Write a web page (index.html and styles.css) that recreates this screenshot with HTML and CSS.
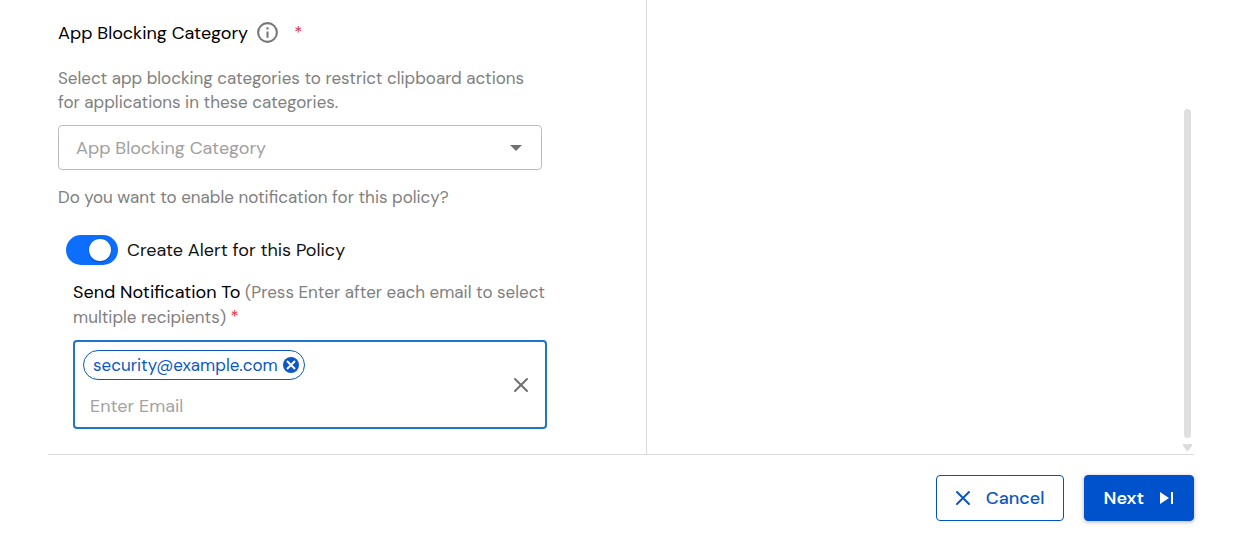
FILE: index.html
```html
<!DOCTYPE html>
<html lang="en">
<head>
    <meta charset="UTF-8">
    <meta name="viewport" content="width=device-width, initial-scale=1.0">
    <title>App Blocking Policy</title>
    <link rel="stylesheet" href="styles.css">
</head>
<body>
    <form class="policy">
        <div class="panels">
            <!-- Policy settings -->
            <div class="settings">
                <div class="title-row">
                    <label class="title" for="category">App Blocking Category</label>
                    <svg class="info-icon" viewBox="0 0 24 24" width="25" height="25" aria-hidden="true">
                        <circle cx="12" cy="12" r="9"/>
                        <path d="M12 11v6M12 7v2"/>
                    </svg>
                    <span class="required">*</span>
                </div>
                <p class="help">Select app blocking categories to restrict clipboard actions for applications in these categories.</p>
                <div class="select-box">
                    <select id="category">
                        <option>App Blocking Category</option>
                    </select>
                    <svg class="arrow" viewBox="0 0 12 6" width="12" height="6" aria-hidden="true">
                        <path d="M0 0h12L6 6z"/>
                    </svg>
                </div>
                <p class="question">Do you want to enable notification for this policy?</p>

                <label class="toggle-row">
                    <input type="checkbox" class="toggle" checked>
                    <span>Create Alert for this Policy</span>
                </label>

                <div class="notify">
                    <label class="notify-label" for="email"><span class="notify-title">Send Notification To</span> (Press Enter after each email to select multiple recipients) <span class="required">*</span></label>
                    <div class="email-box">
                        <div class="email-entries">
                            <span class="chip">security@example.com
                                <button type="button" class="chip-remove" aria-label="Remove security@example.com">
                                    <svg viewBox="0 0 16 16" width="16" height="16">
                                        <circle cx="8" cy="8" r="8"/>
                                        <path d="M4 4l8 8M12 4l-8 8"/>
                                    </svg>
                                </button>
                            </span>
                            <input type="text" id="email" placeholder="Enter Email">
                        </div>
                        <button type="button" class="clear" aria-label="Clear">
                            <svg class="cross" viewBox="0 0 16 16" width="16" height="16">
                                <path d="M2 2l12 12M14 2L2 14"/>
                            </svg>
                        </button>
                    </div>
                </div>
            </div>

            <!-- Empty side panel with its scrollbar -->
            <div class="side">
                <div class="scroll-thumb"></div>
                <svg class="scroll-arrow" viewBox="0 0 9 7" width="9" height="7" aria-hidden="true">
                    <path d="M0 0h9v2L5 7H4L0 2z"/>
                </svg>
            </div>
        </div>

        <div class="actions">
            <button type="button" class="btn btn-cancel">
                <svg class="cross" viewBox="0 0 16 16" width="16" height="16" aria-hidden="true">
                    <path d="M2 2l12 12M14 2L2 14"/>
                </svg>
                Cancel
            </button>
            <button type="button" class="btn btn-next">
                Next
                <svg viewBox="0 0 14 14" width="14" height="14" aria-hidden="true">
                    <path d="M0 1l9 6-9 6zM11 1h2v12h-2z"/>
                </svg>
            </button>
        </div>
    </form>
</body>
</html>
```
FILE: styles.css
```css
* {
    box-sizing: border-box;
}

body {
    margin: 0;
    background: #fff;
    color: #111;
    font-family: "DM Sans", Inter, sans-serif;
    font-size: 17px;
    line-height: 24px;
}

button,
input,
select {
    font: inherit;
}

p {
    margin: 0;
}

.policy {
    padding: 0 43px 0 48px;
}

.panels {
    display: grid;
    grid-template-columns: 23fr 21fr;
    border-bottom: 1px solid #dcdcdc;
}

.settings {
    padding: 20px 99px 25px 10px;
    border-right: 1px solid #dcdcdc;
}

.title-row {
    display: flex;
    align-items: center;
    gap: 7px;
}

.title {
    font-size: 18px;
    color: #000;
}

.info-icon {
    fill: none;
    stroke: #777;
    stroke-width: 2;
}

.required {
    color: #e0303a;
}

.title-row .required {
    margin-left: 7px;
}

.help {
    margin-top: 21px;
    color: #808080;
}

.select-box {
    display: grid;
    align-items: center;
    margin: 11px 5px 0 0;
}

.select-box select,
.select-box .arrow {
    grid-area: 1 / 1;
}

.select-box select {
    appearance: none;
    width: 100%;
    height: 45px;
    padding: 0 40px 0 17px;
    border: 1px solid #bdbdbd;
    border-radius: 4px;
    background: #fff;
    color: #a0a0a0;
    font-size: 18px;
}

.arrow {
    justify-self: end;
    margin-right: 20px;
    fill: #707070;
    pointer-events: none;
}

.question {
    margin-top: 15px;
    color: #808080;
}

.toggle-row {
    display: flex;
    align-items: center;
    gap: 9px;
    margin: 26px 0 0 8px;
    font-size: 18px;
}

.toggle {
    appearance: none;
    display: flex;
    align-items: center;
    justify-content: flex-end;
    flex: none;
    width: 52px;
    height: 30px;
    margin: 0;
    padding: 0 7px;
    border-radius: 15px;
    background: #0d6efd;
}

.toggle::before {
    content: "";
    width: 22px;
    height: 22px;
    border-radius: 50%;
    background: #fff;
    box-shadow: 0 1px 2px rgba(0, 0, 0, 0.3);
}

.toggle:not(:checked) {
    justify-content: flex-start;
    background: #bbb;
}

.notify {
    margin: 15px 0 0 15px;
}

.notify-label {
    display: block;
    color: #808080;
    line-height: 25px;
}

.notify-title {
    color: #000;
    font-size: 18px;
}

.email-box {
    display: flex;
    align-items: center;
    margin-top: 10px;
    padding: 8px 16px 8px 8px;
    border: 2px solid #1f75cb;
    border-radius: 4px;
}

.email-entries {
    flex: 1;
}

.chip {
    display: flex;
    align-items: center;
    gap: 5px;
    width: fit-content;
    height: 30px;
    padding: 0 5px 0 9px;
    border: 1px solid #0b57c4;
    border-radius: 15px;
    color: #0b57c4;
}

.chip-remove,
.clear {
    display: flex;
    padding: 0;
    border: 0;
    background: none;
}

.chip-remove circle {
    fill: #0b57c4;
}

.chip-remove path {
    stroke: #fff;
    stroke-width: 2;
}

.email-entries input {
    display: block;
    width: 100%;
    height: 39px;
    padding: 12px 8px 0 7px;
    border: 0;
    outline: 0;
    font-size: 18px;
}

.email-entries input::placeholder {
    color: #a3a3a3;
}

.cross {
    fill: none;
    stroke: currentColor;
    stroke-width: 2;
    stroke-linecap: round;
}

.clear {
    color: #707070;
}

.side {
    display: flex;
    flex-direction: column;
    align-items: flex-end;
    padding: 109px 2px 3px 0;
}

.scroll-thumb {
    flex: 1;
    width: 7px;
    margin: 0 1px 6px 0;
    border-radius: 4px;
    background: #dfdfdf;
}

.scroll-arrow {
    fill: #dcdcdc;
}

.actions {
    display: flex;
    justify-content: flex-end;
    gap: 20px;
    padding: 20px 0 14px;
}

.btn {
    display: flex;
    align-items: center;
    height: 46px;
    border: 1px solid #0052cc;
    border-radius: 4px;
    font-size: 18px;
    font-weight: 500;
}

.btn-cancel {
    gap: 15px;
    padding: 0 18px;
    background: #fff;
    color: #0b57c4;
}

.btn-next {
    gap: 16px;
    padding: 0 19px;
    background: #0052cc;
    color: #fff;
    font-weight: 600;
    box-shadow: 0 1px 4px rgba(0, 0, 0, 0.3);
}

.btn-next svg {
    fill: currentColor;
}
```
